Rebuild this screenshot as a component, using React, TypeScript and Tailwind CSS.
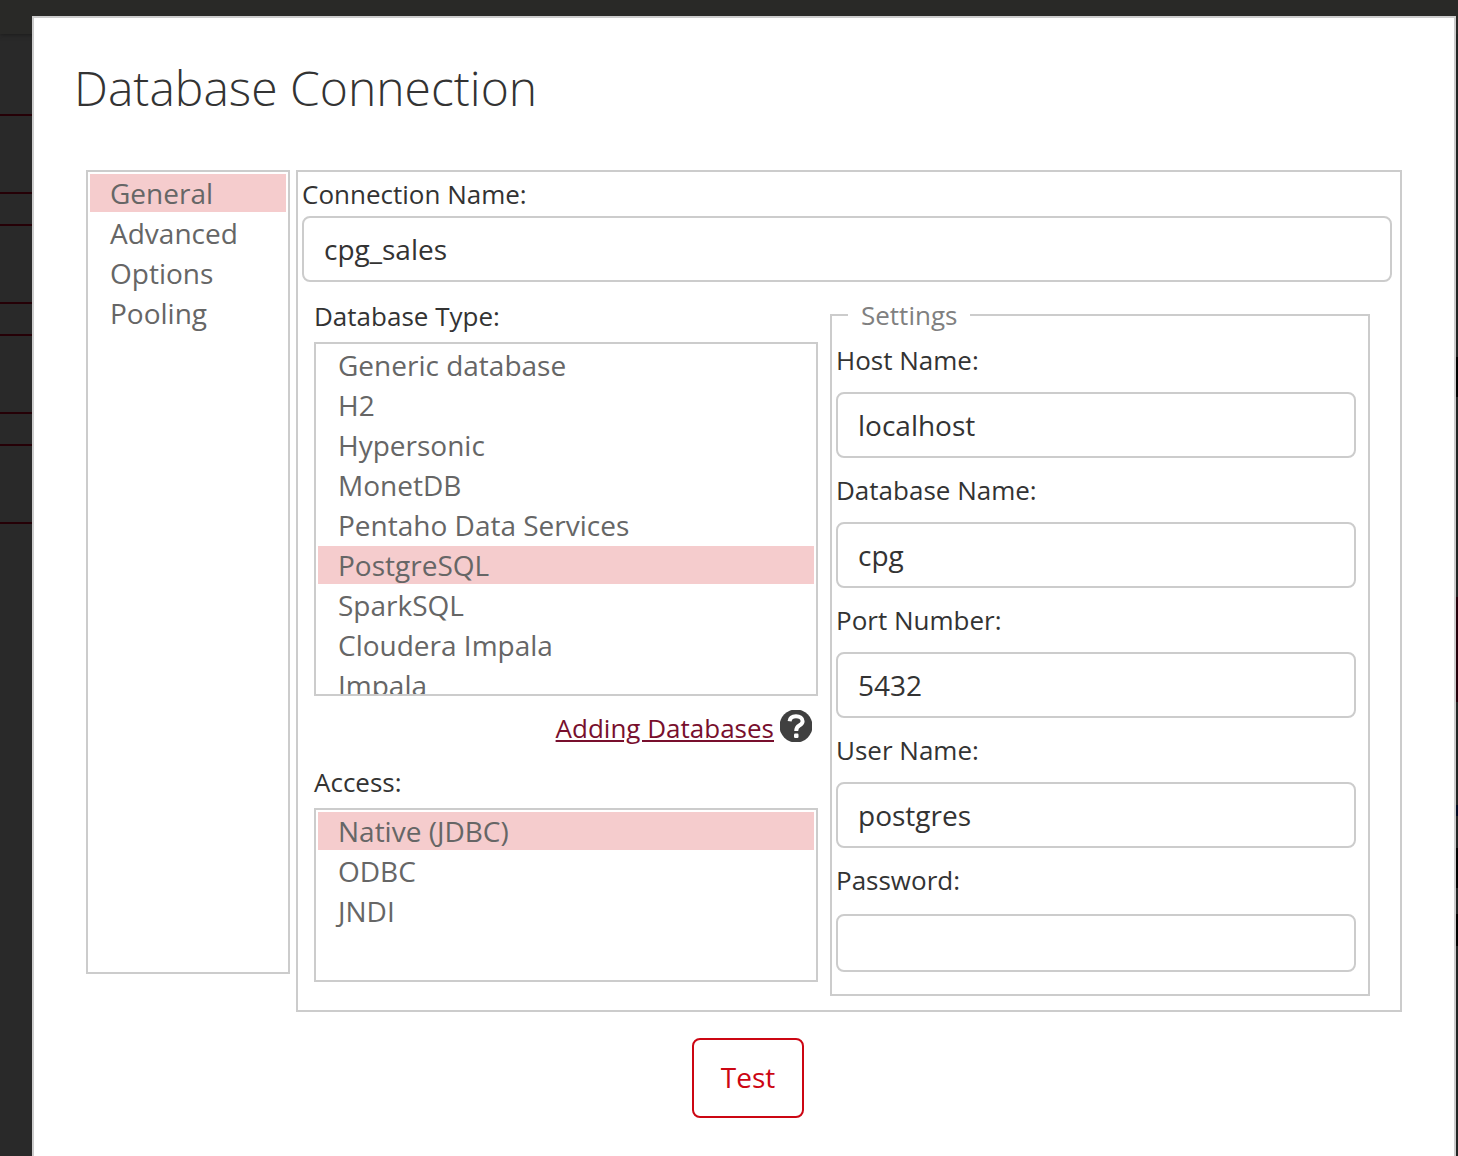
import { useId, useState } from "react";
import type { ReactNode } from "react";

const SECTIONS = ["General", "Advanced", "Options", "Pooling"];
const DATABASES = [
  "Generic database",
  "H2",
  "Hypersonic",
  "MonetDB",
  "Pentaho Data Services",
  "PostgreSQL",
  "SparkSQL",
  "Cloudera Impala",
  "Impala",
];
const ACCESS = ["Native (JDBC)", "ODBC", "JNDI"];

function ListBox({
  items,
  initial,
  className,
  labelledBy,
  label,
}: {
  items: string[];
  initial: string;
  className: string;
  labelledBy?: string;
  label?: string;
}) {
  const [selected, setSelected] = useState(initial);
  return (
    <div
      role="listbox"
      aria-labelledby={labelledBy}
      aria-label={label}
      className={`flex flex-col gap-0.5 overflow-hidden border-2 border-[#cccccc] p-0.5 ${className}`}
    >
      {items.map((item) => (
        <button
          key={item}
          type="button"
          role="option"
          aria-selected={item === selected}
          onClick={() => setSelected(item)}
          className={`h-[38px] shrink-0 pl-5 text-left text-[28px] leading-[38px] text-[#666666] ${
            item === selected ? "bg-[#f5cccd]" : "bg-white"
          }`}
        >
          {item}
        </button>
      ))}
    </div>
  );
}

function TextBox({
  id,
  value,
  type = "text",
  className,
}: {
  id: string;
  value: string;
  type?: string;
  className: string;
}) {
  return (
    <input
      id={id}
      type={type}
      defaultValue={value}
      className={`block w-full rounded-lg border-2 border-[#cccccc] bg-white px-5 text-[28px] text-[#333333] outline-none ${className}`}
    />
  );
}

function Label({ htmlFor, id, children }: { htmlFor?: string; id?: string; children: ReactNode }) {
  return (
    <label id={id} htmlFor={htmlFor} className="block text-[26px] leading-9 text-[#333333]">
      {children}
    </label>
  );
}

function Field({ label, value, type }: { label: string; value: string; type?: string }) {
  const id = useId();
  const isPassword = type === "password";
  return (
    <div>
      <Label htmlFor={id}>{label}</Label>
      <TextBox
        id={id}
        value={value}
        type={type}
        className={isPassword ? "mt-4 h-[58px]" : "mt-3.5 h-[66px]"}
      />
    </div>
  );
}

function HelpIcon() {
  return (
    <svg viewBox="0 0 32 32" className="size-8" aria-hidden="true">
      <circle cx="16" cy="16" r="16.5" fill="#404040" />
      <path
        d="M9.6 11.2C10 7.800 12.600 6.200 16 6.200c3.900 0 6.600 1.900 6.600 5 0 2.200-1.400 3.300-3.300 4.400-2.300 1.300-3.100 2.200-3.100 5.400"
        fill="none"
        stroke="#fff"
        strokeWidth="4"
      />
      <rect x="14" y="23.500" width="4.500" height="4.500" rx="1.200" fill="#fff" />
    </svg>
  );
}

function Backdrop() {
  return (
    <div aria-hidden="true" className="absolute inset-0 flex flex-col overflow-hidden bg-[#292929]">
      <div className="h-[34px] shrink-0 bg-[#292927] shadow-[0_1px_4px_#1c1c1c]" />
      <div className="flex flex-1">
        <div className="flex flex-1 flex-col gap-[30px] pt-20">
          <div className="h-20 border-y-2 border-[#250006]" />
          <div className="h-20 border-y-2 border-[#250006]" />
          <div className="h-20 border-y-2 border-[#250006]" />
          <div className="h-20 border-y-2 border-[#250006]" />
        </div>
        <div className="flex w-0.5 flex-col bg-[#222524]">
          <div className="mt-[323px] h-10 bg-black" />
          <div className="mt-[200px] h-[105px] bg-[#24000a]" />
          <div className="mt-[103px] h-[11px] bg-[#000a24]" />
          <div className="mt-8 h-10 bg-black" />
          <div className="mt-[26px] h-8 bg-black" />
        </div>
      </div>
    </div>
  );
}

export default function App() {
  const nameId = useId();
  const typeId = useId();
  const accessId = useId();
  return (
    <div className="relative flex min-h-screen flex-col pt-4 pr-0.5 pl-8 font-['Open_Sans',sans-serif]">
      <Backdrop />
      <div
        role="dialog"
        aria-label="Database Connection"
        className="relative flex-1 border-2 border-b-0 border-[#cccccc] bg-white"
      >
        <h1 className="px-10 pt-9 text-5xl leading-[68px] font-light text-[#333333]">
          Database Connection
        </h1>
        <div className="mt-12 flex items-start gap-1.5 px-[52px]">
          <ListBox
            items={SECTIONS}
            initial="General"
            label="Connection sections"
            className="h-[804px] w-[204px] shrink-0"
          />
          <form className="min-w-0 flex-1 border-2 border-[#cccccc] pt-1 pr-2 pb-3.5 pl-1">
            <Label htmlFor={nameId}>Connection Name:</Label>
            <TextBox id={nameId} value="cpg_sales" className="mt-1 h-[66px]" />
            <div className="mt-4 grid grid-cols-[504fr_540fr] gap-3 pr-[22px] pl-3">
              <div className="min-w-0">
                <Label id={typeId}>Database Type:</Label>
                <ListBox
                  items={DATABASES}
                  initial="PostgreSQL"
                  labelledBy={typeId}
                  className="mt-2 h-[354px]"
                />
                <div className="mt-3.5 flex h-9 items-start justify-end gap-1.5 pr-1.5">
                  <a href="#adding-databases" className="text-[26px] leading-9 text-[#780f2d] underline">
                    Adding Databases
                  </a>
                  <button type="button" aria-label="Help">
                    <HelpIcon />
                  </button>
                </div>
                <div className="mt-[18px]">
                  <Label id={accessId}>Access:</Label>
                </div>
                <ListBox
                  items={ACCESS}
                  initial="Native (JDBC)"
                  labelledBy={accessId}
                  className="mt-2 h-[174px]"
                />
              </div>
              <fieldset className="flex min-w-0 flex-col gap-3.5 border-2 border-[#cccccc] pt-2.5 pr-3 pb-[22px] pl-1">
                <legend className="ml-3 px-[13px] text-[26px] leading-[34px] text-[#808080]">
                  Settings
                </legend>
                <Field label="Host Name:" value="localhost" />
                <Field label="Database Name:" value="cpg" />
                <Field label="Port Number:" value="5432" />
                <Field label="User Name:" value="postgres" />
                <Field label="Password:" value="" type="password" />
              </fieldset>
            </div>
          </form>
        </div>
        <div className="mt-[26px] flex justify-center pl-2">
          <button
            type="button"
            className="h-20 w-28 rounded-lg border-2 border-[#cc0613] pb-0.5 text-[28px] text-[#cc0613]"
          >
            Test
          </button>
        </div>
      </div>
    </div>
  );
}
